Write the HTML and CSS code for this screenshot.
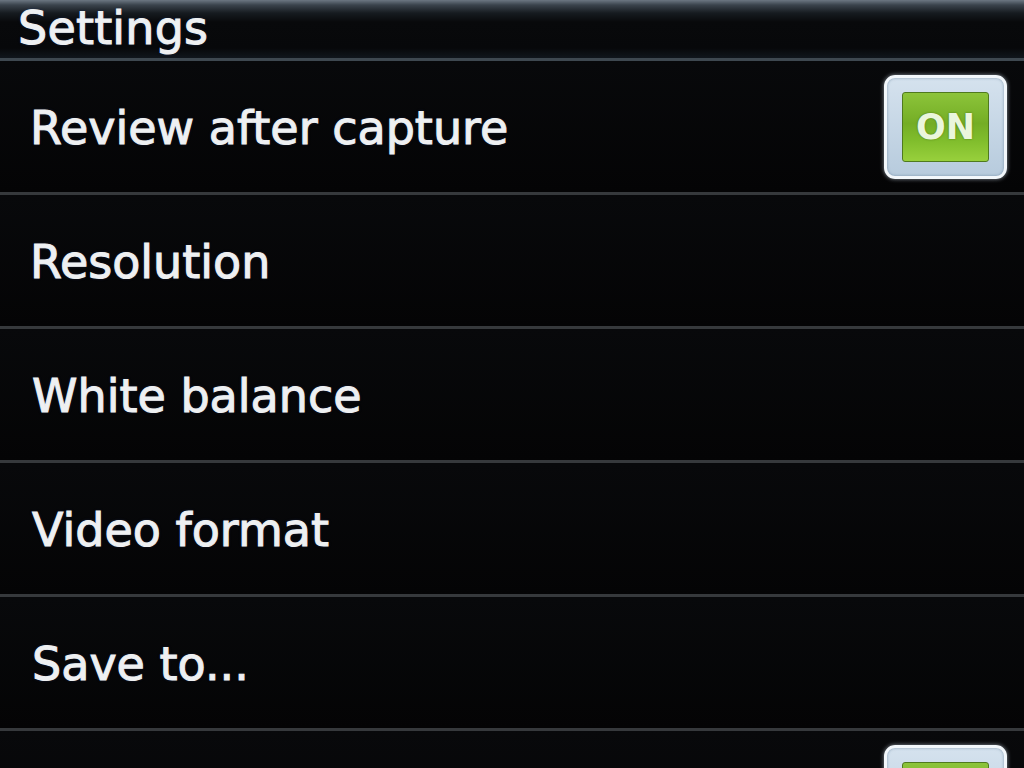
FILE: index.html
```html
<!DOCTYPE html>
<html lang="en">

    <head>
        <meta charset="UTF-8">
        <meta name="viewport" content="width=device-width, initial-scale=1.0">
        <title>Settings</title>
        <link rel="stylesheet" href="styles.css">
    </head>

    <body>
        <div id="screen">
            <div class="title-bar">Settings</div>
            <div class="list">
                <div class="row">
                    <span class="label">Review after capture</span>
                    <div class="toggle"><div class="toggle-face">ON</div></div>
                </div>
                <div class="row">
                    <span class="label">Resolution</span>
                </div>
                <div class="row">
                    <span class="label shift">White balance</span>
                </div>
                <div class="row">
                    <span class="label shift">Video format</span>
                </div>
                <div class="row">
                    <span class="label shift">Save to...</span>
                </div>
                <div class="row row-last">
                    <span class="label"></span>
                    <div class="toggle"><div class="toggle-face"></div></div>
                </div>
            </div>
        </div>
    </body>

</html>
```

FILE: styles.css
```css
html {
    height: 100%;
}

body {
    margin: 0px;
    overflow: hidden;
    width: 100%;
    height: 100%;
    background: #050507;
    font-family: "DejaVu Sans", Verdana, sans-serif;
    color: #eef0f2;
}

body * {
    box-sizing: border-box;
}

#screen {
    width: 1024px;
    height: 768px;
    display: flex;
    flex-direction: column;
    overflow: hidden;
}

.title-bar {
    height: 61px;
    flex-shrink: 0;
    padding: 0px 0px 0px 18px;
    font-size: 46px;
    line-height: 56px;
    letter-spacing: 0.2px;
    background: linear-gradient(to bottom, #6c7782 0px, #3a434c 5px, #161b20 13px, #08090b 22px, #07080a 48px, #10161c 58px);
    -webkit-text-stroke: 1px #eef0f2;
    text-shadow: 0px 0px 3px rgba(20, 40, 90, 0.9);
    border-bottom: 3px solid #3e4850;
}

.list {
    display: flex;
    flex-direction: column;
}

.row {
    height: 134px;
    flex-shrink: 0;
    display: flex;
    align-items: center;
    justify-content: space-between;
    padding: 0px 17px 0px 30px;
    border-bottom: 3px solid #36393c;
    background: linear-gradient(to bottom, #08090b, #040405);
}

.label {
    font-size: 46px;
    line-height: 54px;
    margin-top: 2px;
    -webkit-text-stroke: 1px #eef0f2;
    text-shadow: 0px 0px 3px rgba(30, 40, 80, 0.8);
}

.shift {
    margin-left: 2px;
}

.toggle {
    width: 123px;
    height: 104px;
    padding: 14px 15px;
    border-radius: 11px;
    border: 3px solid #f2f7fb;
    background: linear-gradient(to bottom, #d5e2ee, #b7cbdd);
    box-shadow: 0px 0px 4px rgba(220, 235, 250, 0.6), inset 0px 0px 3px rgba(80, 110, 140, 0.6);
}

.toggle-face {
    width: 100%;
    height: 100%;
    display: flex;
    align-items: center;
    justify-content: center;
    border-radius: 3px;
    border: 1px solid #4f7a1e;
    background: linear-gradient(to bottom, #8cc43a 0%, #74ad25 45%, #80bd2c 70%, #98d03c 100%);
    font-family: "DejaVu Sans", Verdana, sans-serif;
    font-weight: bold;
    font-size: 35px;
    color: #eaf6dc;
    text-shadow: 0px 0px 2px rgba(40, 70, 10, 0.6);
}

.row-last {
    align-items: flex-start;
    padding-top: 14px;
}
```
